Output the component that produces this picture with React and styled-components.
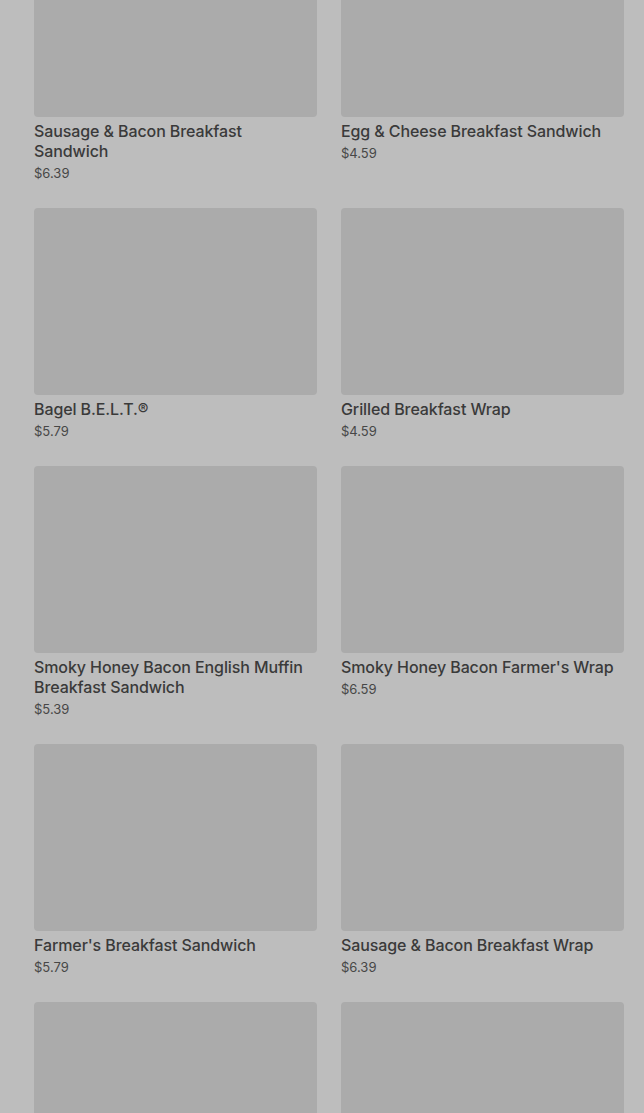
import React from "react";
import styled, { createGlobalStyle } from "styled-components";

const Global = createGlobalStyle`
  html, body { margin: 0; padding: 0; background: #bdbdbd; }
  body { font-family: "Inter", "Roboto", "Liberation Sans", sans-serif; overflow: hidden; }
`;

const Page = styled.main`
  background: #bdbdbd;
  height: 1113px;
  padding: 0 20px 0 34px;
  overflow: hidden;
`;

const Grid = styled.div`
  display: grid;
  grid-template-columns: 1fr 1fr;
  column-gap: 24px;
  row-gap: 23px;
  margin-top: -70px;
`;

const Card = styled.article`
  display: flex;
  flex-direction: column;
`;

const Thumb = styled.div`
  height: 187px;
  background: #ababab;
  border-radius: 4px;
`;

const Info = styled.div`
  padding-top: 4px;
  display: flex;
  flex-direction: column;
`;

const Title = styled.h3`
  margin: 0;
  font-size: 16px;
  line-height: 20px;
  font-weight: 500;
  color: #3a3a3a;
  letter-spacing: -0.1px;
`;

const Price = styled.span`
  font-size: 13px;
  line-height: 24px;
  color: #474747;
`;

const items = [
  ["Sausage & Bacon Breakfast Sandwich", "$6.39"],
  ["Egg & Cheese Breakfast Sandwich", "$4.59"],
  ["Bagel B.E.L.T.®", "$5.79"],
  ["Grilled Breakfast Wrap", "$4.59"],
  ["Smoky Honey Bacon English Muffin Breakfast Sandwich", "$5.39"],
  ["Smoky Honey Bacon Farmer's Wrap", "$6.59"],
  ["Farmer's Breakfast Sandwich", "$5.79"],
  ["Sausage & Bacon Breakfast Wrap", "$6.39"],
  ["Egg & Cheese Bagel", "$4.59"],
  ["Steak & Egg Bagel", "$6.99"],
];

export default function App() {
  return (
    <>
      <Global />
      <Page>
        <Grid>
          {items.map(([name, price]) => (
            <Card key={name}>
              <Thumb />
              <Info>
                <Title>{name}</Title>
                <Price>{price}</Price>
              </Info>
            </Card>
          ))}
        </Grid>
      </Page>
    </>
  );
}
